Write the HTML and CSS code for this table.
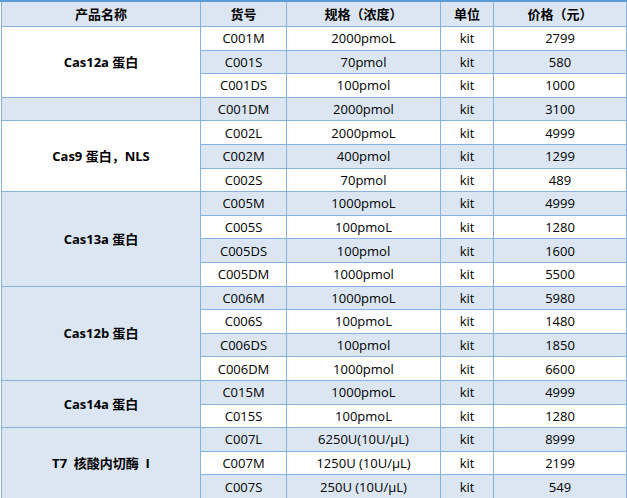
FILE: index.html
```html
<!DOCTYPE html>
<html lang="zh-CN">
<head>
<meta charset="utf-8">
<title>产品价格表</title>
<link rel="stylesheet" href="styles.css">
</head>
<body>
<div class="topbar"></div>
<div class="wrap">
<table class="price">
  <colgroup>
    <col class="c-name"><col class="c-code"><col class="c-spec"><col class="c-unit"><col class="c-price">
  </colgroup>
  <thead>
    <tr class="head"><th>产品名称</th><th>货号</th><th>规格（浓度）</th><th>单位</th><th>价格（元）</th></tr>
  </thead>
  <tbody>
    <tr><td class="name" rowspan="3">Cas12a 蛋白</td><td>C001M</td><td>2000pmoL</td><td>kit</td><td>2799</td></tr>
    <tr class="alt"><td>C001S</td><td>70pmol</td><td>kit</td><td>580</td></tr>
    <tr><td>C001DS</td><td>100pmol</td><td>kit</td><td>1000</td></tr>
    <tr class="alt"><td class="name"></td><td>C001DM</td><td>2000pmol</td><td>kit</td><td>3100</td></tr>
    <tr><td class="name" rowspan="3">Cas9 蛋白，NLS</td><td>C002L</td><td>2000pmoL</td><td>kit</td><td>4999</td></tr>
    <tr class="alt"><td>C002M</td><td>400pmol</td><td>kit</td><td>1299</td></tr>
    <tr><td>C002S</td><td>70pmol</td><td>kit</td><td>489</td></tr>
    <tr class="alt"><td class="name blue" rowspan="4">Cas13a 蛋白</td><td>C005M</td><td>1000pmoL</td><td>kit</td><td>4999</td></tr>
    <tr><td>C005S</td><td>100pmoL</td><td>kit</td><td>1280</td></tr>
    <tr class="alt"><td>C005DS</td><td>100pmol</td><td>kit</td><td>1600</td></tr>
    <tr><td>C005DM</td><td>1000pmol</td><td>kit</td><td>5500</td></tr>
    <tr class="alt"><td class="name blue" rowspan="4">Cas12b 蛋白</td><td>C006M</td><td>1000pmoL</td><td>kit</td><td>5980</td></tr>
    <tr><td>C006S</td><td>100pmoL</td><td>kit</td><td>1480</td></tr>
    <tr class="alt"><td>C006DS</td><td>100pmol</td><td>kit</td><td>1850</td></tr>
    <tr><td>C006DM</td><td>1000pmol</td><td>kit</td><td>6600</td></tr>
    <tr class="alt"><td class="name blue" rowspan="2">Cas14a 蛋白</td><td>C015M</td><td>1000pmoL</td><td>kit</td><td>4999</td></tr>
    <tr><td>C015S</td><td>100pmoL</td><td>kit</td><td>1280</td></tr>
    <tr class="alt"><td class="name blue" rowspan="3">T7&nbsp; 核酸内切酶&nbsp; I</td><td>C007L</td><td>6250U(10U/μL)</td><td>kit</td><td>8999</td></tr>
    <tr><td>C007M</td><td>1250U (10U/μL)</td><td>kit</td><td>2199</td></tr>
    <tr class="alt"><td>C007S</td><td>250U (10U/μL)</td><td>kit</td><td>549</td></tr>
  </tbody>
</table>
</div>
</body>
</html>
```

FILE: styles.css
```css
html, body {
  margin: 0;
  padding: 0;
  background: #ffffff;
}
body {
  width: 627px;
  height: 498px;
  overflow: hidden;
  font-family: "Open Sans", "Noto Sans CJK SC", sans-serif;
  font-size: 13px;
  color: #000;
}
.topbar {
  height: 2px;
  background: #5b9bd5;
}
.wrap {
  padding-left: 1px;
}
.price {
  border-collapse: separate;
  border-spacing: 0;
  table-layout: fixed;
  width: 625px;
  border-left: 1px solid #84b2e2;
}
.c-name { width: 199px; }
.c-code { width: 86px; }
.c-spec { width: 154px; }
.c-unit { width: 53px; }
.c-price { width: 133px; }
.price th,
.price td {
  border-right: 1px solid #84b2e2;
  border-bottom: 1px solid #84b2e2;
  padding: 0;
  text-align: center;
  vertical-align: middle;
  white-space: nowrap;
  line-height: 16px;
}
.price th {
  font-family: "Noto Sans CJK SC", sans-serif;
  font-weight: bold;
  background: #dce6f2;
}
.head { height: 25px; }
.price tbody tr { height: 23.6px; }
.price tr.alt td { background: #dce6f2; }
.price td.name {
  font-family: "Open Sans", "Noto Sans CJK SC", sans-serif;
  font-weight: bold;
  background: #ffffff;
}
.price tr td.name.blue,
.price tr.alt td.name { background: #dce6f2; }
```
